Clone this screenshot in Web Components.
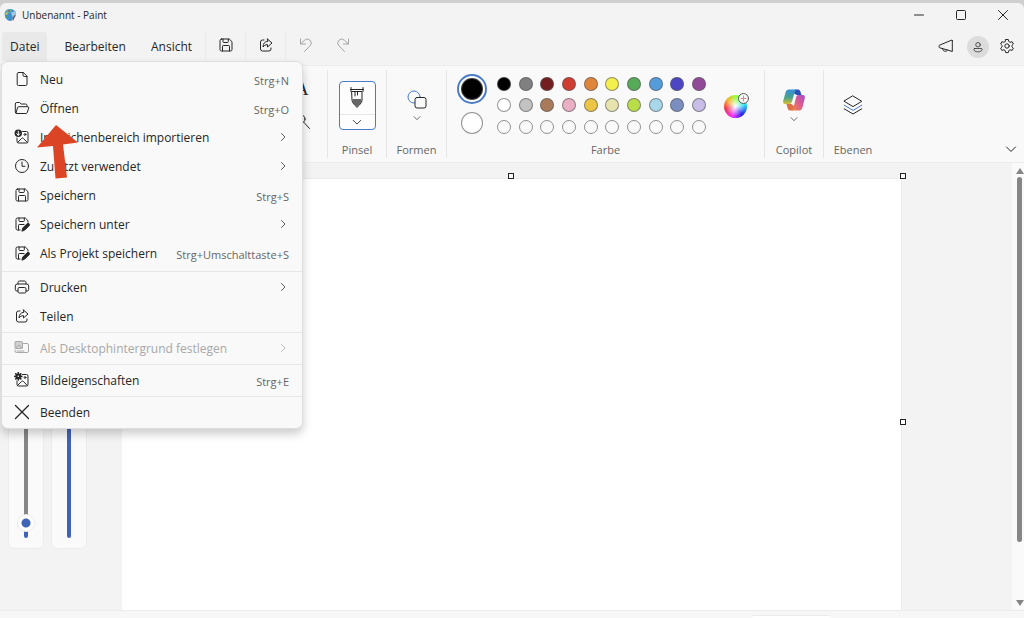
<!DOCTYPE html>
<html lang="de">
<head>
<meta charset="utf-8">
<title>Unbenannt - Paint</title>
<style>
html, body {
	margin: 0;
	height: 100%;
	background: #cfcfcf;
	overflow: hidden;
}

body {
	--panel: #f9f9f9;
	--base: #f3f3f3;
	--line: #e6e6e6;
	--ink: #262626;
	--muted: #666;
	--blue: #3f63b5;
	font-family: "Open Sans", "Noto Sans", sans-serif;
	font-size: 12px;
	line-height: 16px;
	color: var(--ink);
}
</style>
</head>
<body>

<paint-app></paint-app>

<template id="title-template">
<style>
:host {
	display: flex;
	align-items: center;
	height: 24px;
	padding: 0 0 2px 3px;
	font-size: 10px;
}
h1 {
	flex: 1;
	margin: 0 0 0 5px;
	font-size: 10px;
	font-weight: normal;
}
button {
	width: 42px;
	height: 24px;
	padding: 0;
	border: 0;
	background: none;
	color: inherit;
	display: grid;
	place-items: center;
}
</style>
<paint-icon name="logo" size="14"></paint-icon>
<h1><slot></slot></h1>
<button aria-label="Minimieren"><paint-icon name="min" size="12"></paint-icon></button>
<button aria-label="Maximieren"><paint-icon name="max" size="12"></paint-icon></button>
<button aria-label="Schließen"><paint-icon name="close" size="12"></paint-icon></button>
</template>

<template id="menubar-template">
<style>
:host {
	display: flex;
	align-items: center;
	height: 29px;
	margin: 3px 0 4px;
	padding: 0 9px 0 2px;
	position: relative;
	z-index: 5;
}
button {
	height: 29px;
	padding: 0;
	border: 0;
	background: none;
	color: inherit;
	font: inherit;
	display: grid;
	place-items: center;
}
.tab {
	padding: 0 8px;
	margin-right: 9px;
}
.tab.open {
	background: #e9e9e9;
	border-radius: 3px 3px 0 0;
}
.tab.last {
	margin-right: 5px;
}
.tool {
	width: 40px;
	padding-bottom: 3px;
	border-left: 1px solid #ebebeb;
}
.history {
	width: 36px;
	padding-bottom: 3px;
}
.undo, .history {
	color: #a5a5a5;
}
.right {
	display: flex;
	align-items: center;
	gap: 10px;
	margin-left: auto;
}
.feedback {
	margin-right: 3px;
	padding-bottom: 2px;
}
.settings {
	padding-bottom: 2px;
}
.user {
	width: 22px;
	height: 22px;
	border-radius: 50%;
	background: #dcdcdc;
}
</style>
<button class="tab open" aria-haspopup="menu" aria-expanded="true">Datei</button>
<button class="tab">Bearbeiten</button>
<button class="tab last">Ansicht</button>
<button class="tool" aria-label="Speichern"><paint-icon name="save"></paint-icon></button>
<button class="tool" aria-label="Teilen"><paint-icon name="share"></paint-icon></button>
<button class="tool undo" aria-label="Rückgängig"><paint-icon name="undo"></paint-icon></button>
<button class="history" aria-label="Wiederholen"><paint-icon name="redo"></paint-icon></button>
<div class="right">
	<button class="feedback" aria-label="Feedback"><paint-icon name="horn"></paint-icon></button>
	<button class="user" aria-label="Konto"><paint-icon name="user" size="12"></paint-icon></button>
	<button class="settings" aria-label="Einstellungen"><paint-icon name="gear"></paint-icon></button>
</div>
<slot></slot>
</template>

<template id="menu-template">
<style>
/* drops out of the menu bar, over the ribbon and the canvas */
:host {
	display: block;
	position: absolute;
	top: 100%;
	left: 1px;
	width: 300px;
	border: 1px solid #dedede;
	border-radius: 7px;
	background: var(--panel);
	box-shadow: 0 5px 10px rgba(0,0,0,0.2);
}
</style>
<slot></slot>
</template>

<template id="section-template">
<style>
:host {
	display: block;
	padding: 1px 0;
	border-bottom: 1px solid var(--line);
}
:host(:first-child) {
	padding: 3px 0;
}
:host(:last-child) {
	border-bottom: 0;
}
</style>
<slot></slot>
</template>

<template id="item-template">
<style>
:host {
	display: block;
}
button {
	display: flex;
	align-items: center;
	width: 100%;
	height: 29px;
	padding: 0 13px 0 12px;
	border: 0;
	background: none;
	color: inherit;
	font: inherit;
	text-align: left;
	white-space: nowrap;
}
button:disabled {
	color: #a8a8a8;
}
paint-icon {
	padding-bottom: 2px;
}
.label {
	flex: 1;
	margin-left: 10px;
}
.key {
	font-size: 11px;
	padding-top: 3px;
	color: var(--muted);
}
</style>
<button role="menuitem">
	<paint-icon size="16"></paint-icon>
	<span class="label"><slot></slot></span>
	<span class="key"></span>
</button>
</template>

<template id="group-template">
<style>
:host {
	display: flex;
	flex-direction: column;
	flex: none;
	width: 58px;
	margin: 4px 0;
	border-right: 1px solid var(--line);
}
:host([last]) {
	border-right: 0;
}
.content {
	flex: 1;
	display: flex;
	align-items: center;
	justify-content: center;
	padding-bottom: 2px;
}
.label {
	min-height: 16px;
	text-align: center;
	font-size: 11px;
	line-height: 16px;
	color: var(--muted);
}
</style>
<div class="content"><slot></slot></div>
<div class="label"></div>
</template>

<template id="palette-template">
<style>
:host {
	display: flex;
	align-items: center;
	width: 100%;
	padding: 0 15px 0 10px;
}
button {
	padding: 0;
	box-sizing: border-box;
	border: 1px solid rgba(90,90,90,0.65);
	border-radius: 50%;
	width: 14px;
	height: 14px;
}
.current {
	display: flex;
	flex-direction: column;
	align-items: center;
	gap: 8px;
	margin-right: 10px;
	padding-bottom: 3px;
}
.current button {
	width: 22px;
	height: 22px;
	background: #fff;
}
.ring {
	padding: 2px;
	border: 2px solid #4a7cc9;
	border-radius: 50%;
	background: #fff;
	line-height: 0;
}
.ring button {
	background: #000;
}
.swatches {
	display: grid;
	grid-template-columns: repeat(10, 14px);
	justify-content: space-between;
	align-content: space-between;
	width: 209px;
	height: 57px;
}
.wheel {
	margin-left: auto;
	width: 26px;
	height: 26px;
	border: 0;
	border-radius: 0;
	background: none;
}
</style>
<div class="current">
	<div class="ring"><button aria-label="Farbe 1"></button></div>
	<button aria-label="Farbe 2"></button>
</div>
<div class="swatches"></div>
<button class="wheel" aria-label="Farben bearbeiten"><paint-icon name="wheel" size="26"></paint-icon></button>
</template>

<template id="ribbon-template">
<style>
:host {
	display: flex;
	height: 98px;
	box-sizing: border-box;
	background: var(--panel);
	border-top: 1px solid #ededed;
	border-bottom: 1px solid #ececec;
}
button {
	padding: 0;
	border: 0;
	background: none;
	color: inherit;
	font: inherit;
	display: flex;
	flex-direction: column;
	align-items: center;
}
.tools {
	width: 327px;
}
.stack {
	display: flex;
	flex-direction: column;
	align-items: center;
	align-self: flex-start;
	gap: 14px;
	margin: 9px 17px 0 auto;
}
.letter {
	font-family: "Liberation Serif", serif;
	font-size: 18px;
	line-height: 20px;
}
.brush {
	width: 37px;
	height: 49px;
	box-sizing: border-box;
	border: 1px solid #4a7cc9;
	border-radius: 4px;
	background: #fdfdfd;
}
.brush .top {
	width: 100%;
	height: 32px;
	display: grid;
	place-items: center;
	border-bottom: 1px solid var(--line);
}
.brush .drop {
	flex: 1;
	display: grid;
	place-items: center;
}
.split {
	gap: 3px;
}
.colors {
	width: 317px;
}
.shapes {
	width: 59px;
}
.fold {
	margin: auto 7px 7px auto;
}
</style>
<paint-group class="tools">
	<div class="stack">
		<button class="letter" aria-label="Text">A</button>
		<button aria-label="Lupe"><paint-icon name="lens" size="16"></paint-icon></button>
	</div>
</paint-group>
<paint-group label="Pinsel">
	<button class="brush" aria-label="Pinsel">
		<span class="top"><paint-icon name="brush" size="24"></paint-icon></span>
		<span class="drop"><paint-icon name="down" size="10"></paint-icon></span>
	</button>
</paint-group>
<paint-group label="Formen" class="shapes">
	<button class="split" aria-label="Formen">
		<paint-icon name="shapes" size="22"></paint-icon>
		<paint-icon name="down" size="8"></paint-icon>
	</button>
</paint-group>
<paint-group label="Farbe" class="colors"><paint-palette></paint-palette></paint-group>
<paint-group label="Copilot">
	<button class="split" aria-label="Copilot">
		<paint-icon name="copilot" size="24"></paint-icon>
		<paint-icon name="down" size="8"></paint-icon>
	</button>
</paint-group>
<paint-group label="Ebenen" last>
	<button aria-label="Ebenen"><paint-icon name="layers" size="22"></paint-icon></button>
</paint-group>
<button class="fold" aria-label="Menüband einklappen"><paint-icon name="down" size="12"></paint-icon></button>
</template>

<template id="slider-template">
<style>
:host {
	display: flex;
	justify-content: center;
	width: 36px;
	box-sizing: border-box;
	padding: 10px 0;
	border: 1px solid #ececec;
	border-radius: 6px;
	background: #fafafa;
}
input {
	-webkit-appearance: none;
	appearance: none;
	writing-mode: vertical-lr;
	direction: rtl;
	width: 18px;
	height: 100%;
	margin: 0;
	background: none;
}
input::-webkit-slider-runnable-track {
	width: 4px;
	height: 100%;
	border-radius: 2px;
	background: linear-gradient(to top, var(--blue) var(--fill), #868686 var(--fill));
}
input::-webkit-slider-thumb {
	-webkit-appearance: none;
	width: 18px;
	height: 18px;
	margin-left: -7px;
	border: 1px solid #ebebeb;
	border-radius: 50%;
	background: radial-gradient(circle, var(--blue) 0 4px, #fff 5px);
}
</style>
<input type="range" min="0" max="100">
</template>

<template id="workspace-template">
<style>
:host {
	display: flex;
	flex: 1;
	min-height: 0;
	overflow: hidden;
	background: var(--base);
}
.sliders {
	display: flex;
	flex: none;
	gap: 7px;
	width: 114px;
	padding: 61px 0 61px 8px;
}
.view {
	flex: 1;
	overflow: hidden;
	padding-top: 16px;
}
.canvas {
	position: relative;
	margin-right: 111px;
	aspect-ratio: 8 / 5;
	background: #fff;
	outline: 1px solid #ebebeb;
}
/* resize grips sit on the canvas edge */
.grip {
	position: absolute;
	width: 4px;
	height: 4px;
	border: 1px solid #222;
	background: #fff;
}
.n { top: -6px; left: 50%; margin-left: -4px; }
.ne { top: -6px; right: -5px; }
.e { top: 50%; right: -5px; margin-top: -3px; }
.scroll {
	flex: none;
	display: flex;
	flex-direction: column;
	align-items: center;
	width: 12px;
	box-sizing: border-box;
	padding: 5px 0 4px 3px;
	background: #fafafa;
	gap: 3px;
}
.up, .down {
	border: 4px solid transparent;
}
.up { border-bottom: 6px solid #858585; border-top: 0; }
.down { border-top: 6px solid #858585; border-bottom: 0; }
.rail {
	flex: 1;
	width: 5px;
}
.thumb {
	height: 87%;
	border-radius: 3px;
	background: #868686;
}
</style>
<div class="sliders">
	<paint-slider label="Größe" value="2"></paint-slider>
	<paint-slider label="Deckkraft" value="100"></paint-slider>
</div>
<div class="view">
	<div class="canvas">
		<i class="grip n"></i>
		<i class="grip ne"></i>
		<i class="grip e"></i>
	</div>
</div>
<div class="scroll">
	<div class="up"></div>
	<div class="rail"><div class="thumb"></div></div>
	<div class="down"></div>
</div>
</template>

<template id="status-template">
<style>
:host {
	display: flex;
	justify-content: flex-end;
	align-items: flex-end;
	height: 8px;
	box-sizing: border-box;
	padding-right: 193px;
	border-top: 1px solid #ececec;
	background: #f7f7f7;
	overflow: hidden;
}
.zoom {
	width: 80px;
	height: 2px;
	border-radius: 3px 3px 0 0;
	background: #fff;
	border-top: 1px solid #ececec;
}
</style>
<div class="zoom"></div>
</template>

<template id="app-template">
<style>
:host {
	display: flex;
	flex-direction: column;
	box-sizing: border-box;
	height: 100vh;
	padding-top: 3px;
}
.window {
	display: flex;
	flex-direction: column;
	flex: 1;
	min-height: 0;
	position: relative;
	border-radius: 6px 6px 0 0;
	background: var(--base);
}
/* pointer at the open command */
.hint {
	position: absolute;
	left: 37px;
	top: 122px;
	z-index: 6;
	pointer-events: none;
}
</style>
<div class="window">
	<paint-title>Unbenannt - Paint</paint-title>
	<paint-menubar>
		<paint-menu role="menu">
			<menu-section>
				<menu-item icon="file" key="Strg+N">Neu</menu-item>
				<menu-item icon="folder" key="Strg+O">Öffnen</menu-item>
				<menu-item icon="import" more>In Zeichenbereich importieren</menu-item>
				<menu-item icon="clock" more>Zuletzt verwendet</menu-item>
				<menu-item icon="save" key="Strg+S">Speichern</menu-item>
				<menu-item icon="saveas" more>Speichern unter</menu-item>
				<menu-item icon="saveas" key="Strg+Umschalttaste+S">Als Projekt speichern</menu-item>
			</menu-section>
			<menu-section>
				<menu-item icon="print" more>Drucken</menu-item>
				<menu-item icon="share">Teilen</menu-item>
			</menu-section>
			<menu-section>
				<menu-item icon="desktop" more disabled>Als Desktophintergrund festlegen</menu-item>
			</menu-section>
			<menu-section>
				<menu-item icon="props" key="Strg+E">Bildeigenschaften</menu-item>
			</menu-section>
			<menu-section>
				<menu-item icon="exit">Beenden</menu-item>
			</menu-section>
		</paint-menu>
	</paint-menubar>
	<paint-ribbon></paint-ribbon>
	<paint-workspace></paint-workspace>
	<paint-status></paint-status>
	<svg class="hint" width="42" height="54" viewBox="0 0 42 54" aria-hidden="true">
		<path d="M19 0L41 17.500 26 19.500 30 52.500 18.500 53.500 16 21 0 22.500Z" fill="#dc4426"/>
	</svg>
</div>
</template>

<script>
// All icons, drawn with the current text colour unless they say otherwise.
// [viewBox size, markup]
const disk = '<path d="M3.500 2h7.800L14 4.700v7.800a1.500 1.500 0 0 1-1.500 1.500h-9A1.500 1.500 0 0 1 2 12.500v-9A1.500 1.500 0 0 1 3.500 2zM4.500 14V9.300c0-.5.3-.8.8-.8h5.400c.5 0 .8.300.8.800V14M5 2v2.700c0 .5.3.8.8.8h3.700c.5 0 .8-.3.8-.8V2"/>';
const photo = '<path d="M8.500 2.500h4A1.500 1.500 0 0 1 14 4v8.500a1.500 1.500 0 0 1-1.500 1.500h-8A1.500 1.500 0 0 1 3 12.500V9M3.500 13.500l4-4a1.300 1.300 0 0 1 1.900 0l4 4"/><circle cx="11" cy="5.500" r=".9"/>';
const icons = {
	logo: [16, '<path d="M2 8C1 3 6 .5 10 1.500 15 2.500 16 7 14 10c-1 2-3 1-3.500 3-.4 2-3 2.500-5 1C3 12 2.300 10 2 8z" fill="#3f8fd0" stroke="none"/><path d="M3 4C4 1.500 8 .5 11 1.700L8 5 3.500 8z" fill="#59b0a4" stroke="none"/><path d="M9 5l5-1.500 1 4-4 3z" fill="#9dc8e5" stroke="none"/><circle cx="4" cy="6.500" r="1.300" fill="#e5c44b" stroke="none"/><circle cx="7" cy="3.500" r="1.100" fill="#b85c54" stroke="none"/><circle cx="3.500" cy="10" r="1.300" fill="#52a854" stroke="none"/><path d="M13 8l1 .5-2 5.500c-.7.8-1.500 0-1.200-.8z" fill="#78533f" stroke="none"/>'],
	min: [12, '<path d="M1.500 6h9"/>'],
	max: [12, '<rect x="1.500" y="1.500" width="9" height="9" rx="1"/>'],
	close: [12, '<path d="M1.500 1.500l9 9M10.500 1.500l-9 9"/>'],
	save: [16, disk],
	saveas: [16, '<path d="M6 14H3.500A1.500 1.500 0 0 1 2 12.500v-9A1.500 1.500 0 0 1 3.500 2h7.800L14 4.700V6M4.500 14V9.300c0-.5.3-.8.8-.8H10M5 2v2.700c0 .5.3.8.8.8h3.700c.5 0 .8-.3.8-.8V2"/><path d="M8 14.800l.8-2.800 4.300-4.300a1.300 1.300 0 0 1 2 2L10.800 14z" fill="currentColor"/>'],
	share: [16, '<path d="M6 3H4.500A2 2 0 0 0 2.500 5v7a2 2 0 0 0 2 2H11a2 2 0 0 0 2-2v-1"/><path d="M9.500 2L14 6 9.500 10V7.700C7.300 7.600 6 8.500 5 10c.1-3.500 1.800-5.500 4.500-5.700z"/>'],
	undo: [16, '<path d="M2.500 2v5h5M2.700 6.800L6.500 3.300a3.900 3.900 0 0 1 5.600 5.500L6.500 14.500"/>'],
	redo: [16, '<path d="M13.500 2v5h-5M13.300 6.800L9.500 3.300a3.900 3.900 0 0 0-5.600 5.500l5.600 5.700"/>'],
	horn: [16, '<path d="M14.300 2.500v11L9.500 12 1.800 9.800a1 1 0 0 1-.8-1V8a1 1 0 0 1 .7-.9L13.500 2.200c.5-.2.8 0 .8.300zM4.500 10.700c0 3 4.300 3.600 5 1.300"/>'],
	user: [16, '<circle cx="8" cy="5" r="3"/><path d="M3.500 10h9c.8 0 1 .5 1 1.200 0 2-2.500 3.300-5.500 3.300s-5.500-1.300-5.500-3.300c0-.7.3-1.200 1-1.200z"/>'],
	gear: [16, '<circle cx="8" cy="8" r="2.200"/><path d="M6.700 1.500h2.600l.5 2 1.300.8 2-.6 1.300 2.300-1.500 1.400v1.400l1.500 1.400-1.300 2.200-2-.6-1.300.8-.5 2H6.700l-.5-2-1.300-.8-2 .6-1.300-2.200 1.500-1.400V7.400L1.600 6l1.300-2.300 2 .6 1.300-.8z"/>'],
	file: [16, '<path d="M4.500 1.500h4.800L13 5.200v8a1.300 1.300 0 0 1-1.300 1.300H4.500a1.300 1.300 0 0 1-1.300-1.300V2.800a1.300 1.300 0 0 1 1.300-1.300zM9 1.500v2.700c0 .8.500 1.300 1.300 1.300H13"/>'],
	folder: [16, '<path d="M2.800 13.500a1.500 1.500 0 0 1-1.500-1.500V4a1.500 1.500 0 0 1 1.500-1.500h2.700L7.200 4h4.300A1.500 1.500 0 0 1 13 5.500v1M2 13l1.500-5.200a1.500 1.500 0 0 1 1.400-1.100h8.800a1.100 1.100 0 0 1 1 1.400l-1.400 4.300a1.500 1.500 0 0 1-1.400 1.100H2.800"/>'],
	import: [16, photo + '<circle cx="4.300" cy="4.300" r="3.700" fill="currentColor" stroke="none"/><path d="M4.300 2.200v4M2.700 4.700l1.600 1.600 1.600-1.600" stroke="#fff"/>'],
	props: [16, photo + '<path d="M4.300.8v7M.8 4.300h7M1.800 1.800l5 5M6.800 1.800l-5 5" stroke-width="1.700"/><circle cx="4.300" cy="4.300" r="2.300" fill="currentColor"/><circle cx="4.300" cy="4.300" r=".8" fill="#f9f9f9" stroke="none"/>'],
	clock: [16, '<circle cx="8" cy="8" r="6.500"/><path d="M8 4v4.300h3"/>'],
	print: [16, '<path d="M4 5V3.500A1.500 1.500 0 0 1 5.500 2h5A1.500 1.500 0 0 1 12 3.500V5M4 12H2.800A1.500 1.500 0 0 1 1.300 10.500V7A2 2 0 0 1 3.300 5h9.400a2 2 0 0 1 2 2v3.500a1.500 1.500 0 0 1-1.500 1.500H12"/><rect x="4" y="8.500" width="8" height="5.500" rx="1.300"/>'],
	desktop: [16, '<path d="M9.500 3.500H13A1.500 1.500 0 0 1 14.500 5v6a1.500 1.500 0 0 1-1.500 1.500H2.500A1.500 1.500 0 0 1 1 11v-1M3 11h7"/><rect x="1" y="1.500" width="7.500" height="7" rx="1" fill="currentColor" fill-opacity=".5"/><path d="M1.500 8l3.300-3L8 8"/>'],
	exit: [16, '<path d="M1.500 1.500l13 13M14.500 1.500l-13 13" stroke-width="1.300"/>'],
	right: [12, '<path d="M4.500 2.500L8 6 4.500 9.500" stroke-opacity=".75"/>'],
	down: [12, '<path d="M1.500 4L6 8.500 10.500 4"/>'],
	lens: [16, '<circle cx="6.500" cy="6" r="4.500"/><path d="M10 9.500l5.500 6"/>'],
	brush: [24, '<path d="M6 1.500v4M18 1.500v4M5.500 3.500h13M7 5.500h10v9c0 2.500-3 4.500-5 7-2-2.500-5-4.500-5-7z"/><path d="M7.500 13h9v2c0 2-3 4-4.500 6-1.500-2-4.500-4-4.500-6z" fill="#666" stroke="none"/><path d="M10 6v4M12.500 6v3"/>'],
	shapes: [22, '<circle cx="8" cy="8" r="6" stroke="#4a7cc9"/><rect x="9" y="8.500" width="11" height="10.500" rx="2" fill="#f9f9f9"/>'],
	copilot: [24, '<defs><linearGradient id="a" x1="0" y1="0" x2="0" y2="1"><stop offset="0" stop-color="#3290d8"/><stop offset=".55" stop-color="#4ba28b"/><stop offset="1" stop-color="#d6bf34"/></linearGradient><linearGradient id="b" x1="1" y1="0" x2="0" y2="1"><stop offset="0" stop-color="#a64bd0"/><stop offset=".5" stop-color="#dc5e8c"/><stop offset="1" stop-color="#f08b45"/></linearGradient></defs><path d="M13 1.500h3c1.500 0 2 1 2.500 2.500l1 3h-5L11 5z" fill="#2b50bd" stroke="none"/><path d="M6.500 1.500h8c-1.500 1-2 3-2.500 5l-2 7c-.5 2-1.500 2.500-3.500 2.500H3.500C1 16 .8 14 1.400 12l2-7C4 3 5 1.500 6.500 1.500z" fill="url(#a)" stroke="none"/><path d="M11 22.500H8c-1.500 0-2-1-2.500-2.500l-1-4h5L13 19z" fill="#db7145" stroke="none"/><path d="M17.500 22.500h-8c1.500-1 2-3 2.500-5l2-8c.5-2 1.500-2.500 3.500-2.500h3c2.500 0 2.700 2 2.100 4l-2 8c-.6 2-1.600 3.500-3.100 3.500z" fill="url(#b)" stroke="none"/>'],
	layers: [22, '<path d="M11 2l8.800 5.300L11 12.600 2.200 7.300z"/><path d="M2.200 11.200L11 16.400l8.800-5.200" stroke="#4a7cc9"/><path d="M2.200 14.800L11 20l8.800-5.200"/>'],
	wheel: [26, '<foreignObject x="1" y="3" width="23" height="23"><div style="width:23px;height:23px;border-radius:50%;background:radial-gradient(circle,#fff,#fff0 60%),conic-gradient(#9f3,#2ee 75deg,#22e 140deg,#e3f 195deg,#f2364a 260deg,#fa3 305deg,#9f3)"></div></foreignObject><circle cx="20.500" cy="6.500" r="5" fill="#fbfbfb" stroke="#555"/><path d="M20.500 4v5M18 6.500h5" stroke="#d88"/>']
};

class PaintIcon extends HTMLElement {
	constructor() {
		super();
		this.attachShadow({mode: 'open'});
	}
	static get observedAttributes() {
		return ['name'];
	}
	connectedCallback() {
		this.draw();
	}
	attributeChangedCallback() {
		this.draw();
	}
	draw() {
		const icon = icons[this.getAttribute('name')];
		if (!icon) return;
		const size = this.getAttribute('size') || 16;
		this.shadowRoot.innerHTML = `
			<style>
			:host { display: block; flex: none; line-height: 0; }
			svg { fill: none; stroke: currentColor; stroke-linecap: round; stroke-linejoin: round; }
			</style>
			<svg width="${size}" height="${size}" viewBox="0 0 ${icon[0]} ${icon[0]}" aria-hidden="true">${icon[1]}</svg>`;
	}
}

// Base class: clones the template named by the subclass
class PaintElement extends HTMLElement {
	constructor() {
		super();
		const shadowRoot = this.attachShadow({mode: 'open'});
		const template = document.querySelector('#' + this.constructor.template);
		shadowRoot.appendChild(template.content.cloneNode(true));
	}
}

class PaintTitle extends PaintElement {
	static template = 'title-template';
}

class PaintMenubar extends PaintElement {
	static template = 'menubar-template';
}

class PaintMenu extends PaintElement {
	static template = 'menu-template';
}

class MenuSection extends PaintElement {
	static template = 'section-template';
}

class MenuItem extends PaintElement {
	static template = 'item-template';
	connectedCallback() {
		const root = this.shadowRoot;
		const key = root.querySelector('.key');
		root.querySelector('paint-icon').setAttribute('name', this.getAttribute('icon'));
		root.querySelector('button').disabled = this.hasAttribute('disabled');
		if (this.hasAttribute('more')) {
			key.outerHTML = '<paint-icon name="right" size="12"></paint-icon>';
		} else {
			key.textContent = this.getAttribute('key') || '';
		}
	}
}

class PaintGroup extends PaintElement {
	static template = 'group-template';
	connectedCallback() {
		this.shadowRoot.querySelector('.label').textContent = this.getAttribute('label') || '';
	}
}

const colors = [
	'#000000', '#808080', '#741d20', '#cf3c32', '#e0853a', '#f3ef4f', '#57aa58', '#559cdb', '#4c46c4', '#914b98',
	'#ffffff', '#c3c3c3', '#aa7b5a', '#eaaec5', '#ecc545', '#e7e4b0', '#bade4a', '#a8d7ea', '#7a8fc0', '#c7bde6'
];

class PaintPalette extends PaintElement {
	static template = 'palette-template';
	connectedCallback() {
		const box = this.shadowRoot.querySelector('.swatches');
		for (let i = 0; i < 30; i++) {
			const swatch = document.createElement('button');
			swatch.style.background = colors[i] || 'none';
			swatch.setAttribute('aria-label', colors[i] || 'Leer');
			box.appendChild(swatch);
		}
	}
}

class PaintRibbon extends PaintElement {
	static template = 'ribbon-template';
}

class PaintSlider extends PaintElement {
	static template = 'slider-template';
	connectedCallback() {
		const input = this.shadowRoot.querySelector('input');
		input.value = this.getAttribute('value');
		input.setAttribute('aria-label', this.getAttribute('label'));
		const fill = () => input.style.setProperty('--fill', input.value + '%');
		input.addEventListener('input', fill);
		fill();
	}
}

class PaintWorkspace extends PaintElement {
	static template = 'workspace-template';
}

class PaintStatus extends PaintElement {
	static template = 'status-template';
}

class PaintApp extends PaintElement {
	static template = 'app-template';
}

window.customElements.define('paint-icon', PaintIcon);
window.customElements.define('paint-title', PaintTitle);
window.customElements.define('paint-menubar', PaintMenubar);
window.customElements.define('paint-menu', PaintMenu);
window.customElements.define('menu-section', MenuSection);
window.customElements.define('menu-item', MenuItem);
window.customElements.define('paint-group', PaintGroup);
window.customElements.define('paint-palette', PaintPalette);
window.customElements.define('paint-ribbon', PaintRibbon);
window.customElements.define('paint-slider', PaintSlider);
window.customElements.define('paint-workspace', PaintWorkspace);
window.customElements.define('paint-status', PaintStatus);
window.customElements.define('paint-app', PaintApp);
</script>
</body>
</html>
